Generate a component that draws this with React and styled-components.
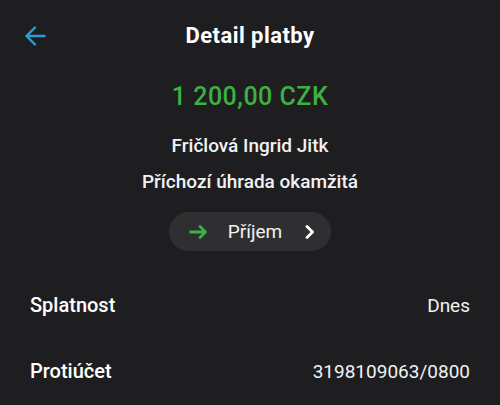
import React from 'react';
import styled, { createGlobalStyle } from 'styled-components';

const GlobalStyle = createGlobalStyle`
  html, body {
    margin: 0;
    padding: 0;
    background: #1e1e20;
  }
  body {
    font-family: Roboto, "Noto Sans", sans-serif;
    color: #ffffff;
  }
`;

const Screen = styled.div`
  width: 500px;
  height: 405px;
  background: #1e1e20;
  overflow: hidden;
`;

const Header = styled.div`
  height: 72px;
  display: grid;
  grid-template-columns: 1fr auto 1fr;
  align-items: center;
`;

const BackButton = styled.button`
  justify-self: start;
  margin-left: 22px;
  width: 26px;
  height: 26px;
  padding: 0;
  background: none;
  border: none;
  display: flex;
  align-items: center;
  justify-content: center;
`;

const Title = styled.h1`
  margin: 0;
  font-size: 22px;
  line-height: 28px;
  font-weight: 700;
  letter-spacing: 0.45px;
`;

const Summary = styled.div`
  display: flex;
  flex-direction: column;
  align-items: center;
`;

const Amount = styled.div`
  margin-top: 10px;
  font-size: 25px;
  line-height: 30px;
  font-weight: 500;
  letter-spacing: 0.5px;
  color: #3cb043;
`;

const Line = styled.div`
  font-size: 19px;
  line-height: 24px;
  font-weight: 500;
  color: #f2f2f2;
  margin-top: ${p => p.$gap}px;
`;

const Pill = styled.button`
  margin-top: 18px;
  height: 39px;
  padding: 0 16px 0 20px;
  display: flex;
  align-items: center;
  border: none;
  border-radius: 20px;
  background: #2f2f31;
  color: #f2f2f2;
  font-family: inherit;
  font-size: 19px;
  font-weight: 400;
`;

const PillLabel = styled.span`
  margin: 0 22px 0 20px;
`;

const Rows = styled.div`
  margin-top: 21px;
  padding: 0 30px;
`;

const Row = styled.div`
  height: 66px;
  display: flex;
  align-items: center;
  justify-content: space-between;
`;

const Label = styled.span`
  font-size: 20px;
  font-weight: 500;
`;

const Value = styled.span`
  font-size: 19px;
  font-weight: 400;
  color: #f2f2f2;
`;

const ArrowLeft = () => (
  <svg width="22" height="22" viewBox="0 0 22 22" fill="none" stroke="#2a9fd4" strokeWidth="2.4" strokeLinecap="round" strokeLinejoin="round">
    <path d="M20.5 11H2.5M11 2.5L2.5 11l8.5 8.5" />
  </svg>
);

const ArrowRight = () => (
  <svg width="19" height="14" viewBox="0 0 19 14" fill="none" stroke="#3cb043" strokeWidth="2.8" strokeLinecap="round" strokeLinejoin="round">
    <path d="M1.5 7h15M11 1.5l5.5 5.5-5.5 5.5" />
  </svg>
);

const Chevron = () => (
  <svg width="11" height="14" viewBox="0 0 11 14" fill="none" stroke="#ffffff" strokeWidth="2.8" strokeLinecap="round" strokeLinejoin="round">
    <path d="M3 1.5l5.5 5.5-5.5 5.5" />
  </svg>
);

const App = () => {
  return (
    <Screen>
      <GlobalStyle />
      <Header>
        <BackButton aria-label="Zpět">
          <ArrowLeft />
        </BackButton>
        <Title>Detail platby</Title>
      </Header>
      <Summary>
        <Amount>1 200,00 CZK</Amount>
        <Line $gap={22}>Fričlová Ingrid Jitk</Line>
        <Line $gap={12}>Příchozí úhrada okamžitá</Line>
        <Pill>
          <ArrowRight />
          <PillLabel>Příjem</PillLabel>
          <Chevron />
        </Pill>
      </Summary>
      <Rows>
        <Row>
          <Label>Splatnost</Label>
          <Value>Dnes</Value>
        </Row>
        <Row>
          <Label>Protiúčet</Label>
          <Value>3198109063/0800</Value>
        </Row>
      </Rows>
    </Screen>
  );
};

export default App;
